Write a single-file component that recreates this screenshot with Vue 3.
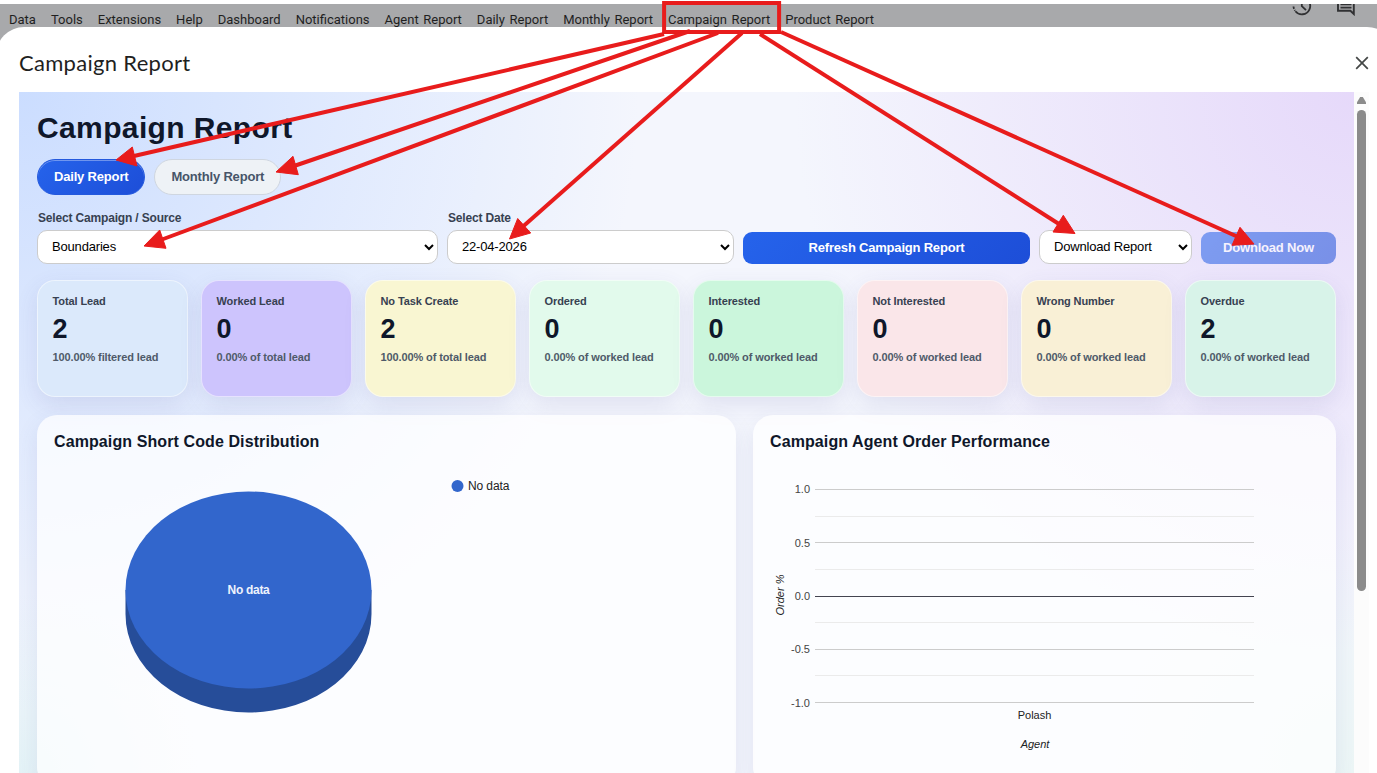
<template>
  <div class="screen">
    <!-- Spreadsheet menu bar behind the dialog -->
    <div class="menu-bar">
      <nav class="menu">
        <span v-for="item in menuItems" :key="item" class="menu-item">{{ item }}</span>
      </nav>
      <div class="menu-icons">
        <svg width="20" height="20" viewBox="0 0 20 20" fill="none" stroke="#303133" stroke-width="1.8">
          <path d="M1.5 10.5A8.3 8.3 0 0 0 3 14.7" stroke-dasharray="2.4 1.3" />
          <path d="M3.4 15.2A8.3 8.3 0 1 0 9.8 1.7" />
          <path d="M9.8 5v5.2l4.2 4" />
        </svg>
        <svg width="20" height="20" viewBox="0 0 20 20" fill="none" stroke="#303133" stroke-width="1.9">
          <path d="M2 1h15.8v17l-3.4-3.2H2z" />
          <path d="M4.5 5h11M4.5 8.3h11M4.5 11.6h11" stroke-width="1.7" />
        </svg>
      </div>
    </div>

    <div class="dialog">
      <header class="dialog-header">
        <span class="dialog-title">Campaign Report</span>
        <svg class="close" width="14" height="14" viewBox="0 0 14 14" stroke="#444746" stroke-width="1.7">
          <path d="M1.2 1.2l11.6 11.6M12.8 1.2L1.2 12.8" />
        </svg>
      </header>

      <div class="dialog-body">
        <main class="report">
          <h1>Campaign Report</h1>

          <div class="tabs">
            <button class="tab active">Daily Report</button>
            <button class="tab">Monthly Report</button>
          </div>

          <div class="filters">
            <div class="field">
              <label>Select Campaign / Source</label>
              <select><option>Boundaries</option></select>
            </div>
            <div class="field">
              <label>Select Date</label>
              <select><option>22-04-2026</option></select>
            </div>
            <button class="btn">Refresh Campaign Report</button>
            <select><option>Download Report</option></select>
            <button class="btn faded">Download Now</button>
          </div>

          <div class="cards">
            <div v-for="card in cards" :key="card.label" class="card" :class="card.tone">
              <div class="card-label">{{ card.label }}</div>
              <div class="card-value">{{ card.value }}</div>
              <div class="card-note">{{ card.note }}</div>
            </div>
          </div>

          <div class="charts">
            <section class="panel">
              <h2>Campaign Short Code Distribution</h2>
              <svg class="chart" width="660" height="310">
                <path class="pie-side" d="M71.5 130v24a123 98.5 0 0 0 246 0v-24z" />
                <ellipse class="pie-top" cx="194.5" cy="130" rx="123" ry="98.5" />
                <text class="pie-label" x="194.5" y="134" text-anchor="middle">No data</text>
                <circle class="pie-top" cx="403.5" cy="26" r="6" />
                <text class="legend" x="414" y="30">No data</text>
              </svg>
            </section>
            <section class="panel">
              <h2>Campaign Agent Order Performance</h2>
              <svg class="chart" width="549" height="310">
                <g shape-rendering="crispEdges">
                  <rect
                    v-for="line in gridLines"
                    :key="line.y"
                    x="45" :y="line.y" width="439" height="1" :fill="line.color" />
                </g>
                <text
                  v-for="tick in ticks"
                  :key="tick.label"
                  class="tick" x="40" :y="tick.y" text-anchor="end">{{ tick.label }}</text>
                <text class="axis" transform="translate(14 135) rotate(-90)" text-anchor="middle">Order %</text>
                <text class="category" x="264.5" y="259" text-anchor="middle">Polash</text>
                <text class="axis" x="265" y="288" text-anchor="middle">Agent</text>
              </svg>
            </section>
          </div>
        </main>

        <div class="scrollbar">
          <div class="scroll-arrow"></div>
          <div class="scroll-thumb"></div>
        </div>
      </div>
    </div>

    <!-- Callout box and arrows drawn over everything -->
    <svg class="callouts" width="1377" height="773">
      <rect x="664.1" y="3" width="115" height="29" />
      <g v-for="arrow in arrows" :key="arrow.head">
        <path :d="arrow.line" />
        <polygon :points="arrow.head" />
      </g>
    </svg>
  </div>
</template>

<script setup>
const menuItems = [
  'Data', 'Tools', 'Extensions', 'Help', 'Dashboard', 'Notifications',
  'Agent Report', 'Daily Report', 'Monthly Report', 'Campaign Report', 'Product Report'
]

const cards = [
  { label: 'Total Lead', value: 2, note: '100.00% filtered lead', tone: 'blue' },
  { label: 'Worked Lead', value: 0, note: '0.00% of total lead', tone: 'violet' },
  { label: 'No Task Create', value: 2, note: '100.00% of total lead', tone: 'yellow' },
  { label: 'Ordered', value: 0, note: '0.00% of worked lead', tone: 'mint' },
  { label: 'Interested', value: 0, note: '0.00% of worked lead', tone: 'green' },
  { label: 'Not Interested', value: 0, note: '0.00% of worked lead', tone: 'red' },
  { label: 'Wrong Number', value: 0, note: '0.00% of worked lead', tone: 'amber' },
  { label: 'Overdue', value: 2, note: '0.00% of worked lead', tone: 'teal' }
]

const gridLines = [
  { y: 29, color: '#cccccc' },
  { y: 56, color: '#ebebeb' },
  { y: 82, color: '#cccccc' },
  { y: 109, color: '#ebebeb' },
  { y: 136, color: '#444450' },
  { y: 162, color: '#ebebeb' },
  { y: 189, color: '#cccccc' },
  { y: 215, color: '#ebebeb' },
  { y: 242, color: '#cccccc' }
]

const ticks = [
  { label: '1.0', y: 33 },
  { label: '0.5', y: 87 },
  { label: '0.0', y: 140 },
  { label: '-0.5', y: 193 },
  { label: '-1.0', y: 247 }
]

const arrows = [
  { line: 'M664 34L134 156', head: '116,160 132.3,147 137,166' },
  { line: 'M690 31L294 166', head: '276,172 293,156.3 298.3,174.7' },
  { line: 'M718 33L162 239.5', head: '144,246 159.7,230 166,248.3' },
  { line: 'M742 33L523 226.5', head: '509.5,239 517.7,218.5 530.7,233' },
  { line: 'M760 34L1059 224', head: '1075,233.5 1063.3,215.3 1053,232' },
  { line: 'M781 32L1237 236.5', head: '1254,244 1240,227.3 1232,245.3' }
]
</script>

<style>
body {
  margin: 0;
}
</style>

<style scoped>
.screen {
  position: relative;
  width: 1377px;
  height: 773px;
  overflow: hidden;
  background: #ffffff;
  font-family: "Liberation Sans", Arial, sans-serif;
}

.screen * {
  box-sizing: border-box;
}

.menu-bar {
  display: flex;
  justify-content: space-between;
  height: 60px;
  margin-top: 4px;
  padding: 7px 21px 0 9px;
  background: #a8a9ab;
  overflow: hidden;
}

.menu {
  display: flex;
  gap: 15px;
}

.menu-item {
  font-family: Roboto, sans-serif;
  font-size: 13px;
  line-height: 18px;
  word-spacing: 1.4px;
  color: #1f1f1f;
  white-space: nowrap;
}

.menu-icons {
  display: flex;
  gap: 24px;
  margin-top: -15px;
}

.dialog {
  display: flex;
  flex-direction: column;
  height: 760px;
  margin: -37px -18px 0 -4px;
  padding: 0 18px 0 23px;
  border-radius: 28px;
  background: #ffffff;
}

.dialog-header {
  display: flex;
  align-items: center;
  justify-content: space-between;
  height: 65px;
  padding: 6px 8px 0 0;
}

.dialog-title {
  margin-top: -1px;
  font-family: Lato, sans-serif;
  font-size: 22px;
  letter-spacing: 0.3px;
  color: #1f1f1f;
}

.close {
  display: block;
}

.dialog-body {
  display: flex;
  height: 681px;
}

.report {
  width: 1335px;
  height: 681px;
  padding: 19px 18px 18px;
  overflow: hidden;
  background:
    radial-gradient(circle at top left, #cbddff 0, rgba(203, 221, 255, 0) 620px),
    radial-gradient(circle at top right, #e6d9fa 0, rgba(230, 217, 250, 0) 560px),
    radial-gradient(circle at bottom left, #e4f3f7 0, rgba(228, 243, 247, 0) 180px),
    radial-gradient(circle at bottom right, #ecf6f6 0, rgba(236, 246, 246, 0) 240px),
    #f4f6fd;
}

h1 {
  margin: 0;
  font-size: 30px;
  line-height: 34px;
  letter-spacing: 0.37px;
  color: #0f172a;
}

.tabs {
  display: flex;
  gap: 9px;
  margin-top: 14px;
}

.tab {
  height: 36px;
  padding: 0 16px 2px;
  border: 1px solid #cfd6e0;
  border-radius: 18px;
  background: #eef2f6;
  font-family: inherit;
  font-size: 13px;
  font-weight: 700;
  letter-spacing: -0.18px;
  color: #475569;
}

.tab.active {
  border-color: #2459dd;
  background: linear-gradient(135deg, #2563eb, #1d4ed8);
  box-shadow: inset 0 1px 0 rgba(255, 255, 255, 0.35);
  color: #ffffff;
}

.filters {
  display: grid;
  grid-template-columns: 401px 287px 287px 153px 135px;
  gap: 9px;
  align-items: end;
  margin-top: 17px;
}

.field label {
  display: block;
  margin: 0 0 5px 1px;
  font-size: 12px;
  line-height: 13px;
  font-weight: 700;
  letter-spacing: -0.17px;
  color: #374151;
}

select {
  display: block;
  width: 100%;
  height: 34px;
  padding: 0 0 2px 10px;
  border: 1px solid #cccccc;
  border-radius: 10px;
  background: #ffffff;
  font-family: inherit;
  font-size: 13px;
  letter-spacing: -0.18px;
  color: #000000;
}

.btn {
  height: 32px;
  padding: 0 0 2px;
  border: none;
  border-radius: 9px;
  background: linear-gradient(135deg, #2563eb, #1d4ed8);
  font-family: inherit;
  font-size: 13px;
  font-weight: 700;
  letter-spacing: -0.2px;
  color: #ffffff;
}

.btn.faded {
  opacity: 0.55;
}

.cards {
  display: grid;
  grid-template-columns: repeat(8, 1fr);
  gap: 13px;
  margin-top: 16px;
}

.card {
  height: 117px;
  padding: 14px 14px 0 14.5px;
  border: 1px solid rgba(255, 255, 255, 0.5);
  border-radius: 18px;
  box-shadow: 0 8px 22px rgba(70, 70, 150, 0.12);
}

.card-label {
  font-size: 11px;
  line-height: 13px;
  font-weight: 700;
  letter-spacing: -0.1px;
  color: #374151;
}

.card-value {
  margin-top: 5px;
  font-size: 27px;
  line-height: 32px;
  font-weight: 700;
  color: #0f172a;
}

.card-note {
  margin-top: 6px;
  font-size: 11px;
  line-height: 13px;
  font-weight: 700;
  letter-spacing: -0.11px;
  color: #4f5a69;
}

.blue { background: #dbe9fb; }
.violet { background: #cdc4fd; }
.yellow { background: #f9f6d2; }
.mint { background: #e2faec; }
.green { background: #cbf6dc; }
.red { background: #fae6e9; }
.amber { background: #f9f0d6; }
.teal { background: #d8f3e9; }

.charts {
  display: grid;
  grid-template-columns: 699px 583px;
  gap: 17px;
  margin-top: 18px;
}

.panel {
  height: 372px;
  padding: 17px 17px 0;
  border-radius: 20px;
  background: rgba(255, 255, 255, 0.72);
  box-shadow: 0 8px 22px rgba(70, 80, 150, 0.1);
}

h2 {
  margin: 0;
  font-size: 16px;
  line-height: 20px;
  letter-spacing: 0.1px;
  color: #0f172a;
}

.chart {
  display: block;
  margin-top: 8px;
}

.pie-side {
  fill: #264d99;
}

.pie-top {
  fill: #3266cc;
}

.pie-label {
  font-size: 12px;
  font-weight: 700;
  letter-spacing: -0.3px;
  fill: #eef3fc;
}

.legend {
  font-size: 12px;
  letter-spacing: -0.1px;
  fill: #222222;
}

.tick {
  font-size: 11px;
  fill: #444444;
}

.category {
  font-size: 11px;
  fill: #222222;
}

.axis {
  font-size: 11px;
  font-style: italic;
  fill: #222222;
}

.scrollbar {
  display: flex;
  flex-direction: column;
  align-items: center;
  width: 15px;
  padding-top: 5px;
  background: #fcfcfc;
}

.scroll-arrow {
  width: 9px;
  height: 7px;
  background: #8b8b8b;
  clip-path: polygon(35% 0, 65% 0, 100% 75%, 100% 100%, 0 100%, 0 75%);
}

.scroll-thumb {
  width: 9px;
  height: 481px;
  margin-top: 6px;
  border-radius: 5px;
  background: #8b8b8b;
}

.callouts {
  position: absolute;
  top: 0;
  left: 0;
  pointer-events: none;
}

.callouts rect,
.callouts path {
  fill: none;
  stroke: #e81c1c;
  stroke-width: 4;
}

.callouts polygon {
  fill: #e81c1c;
  stroke: #e81c1c;
  stroke-width: 1;
}
</style>
